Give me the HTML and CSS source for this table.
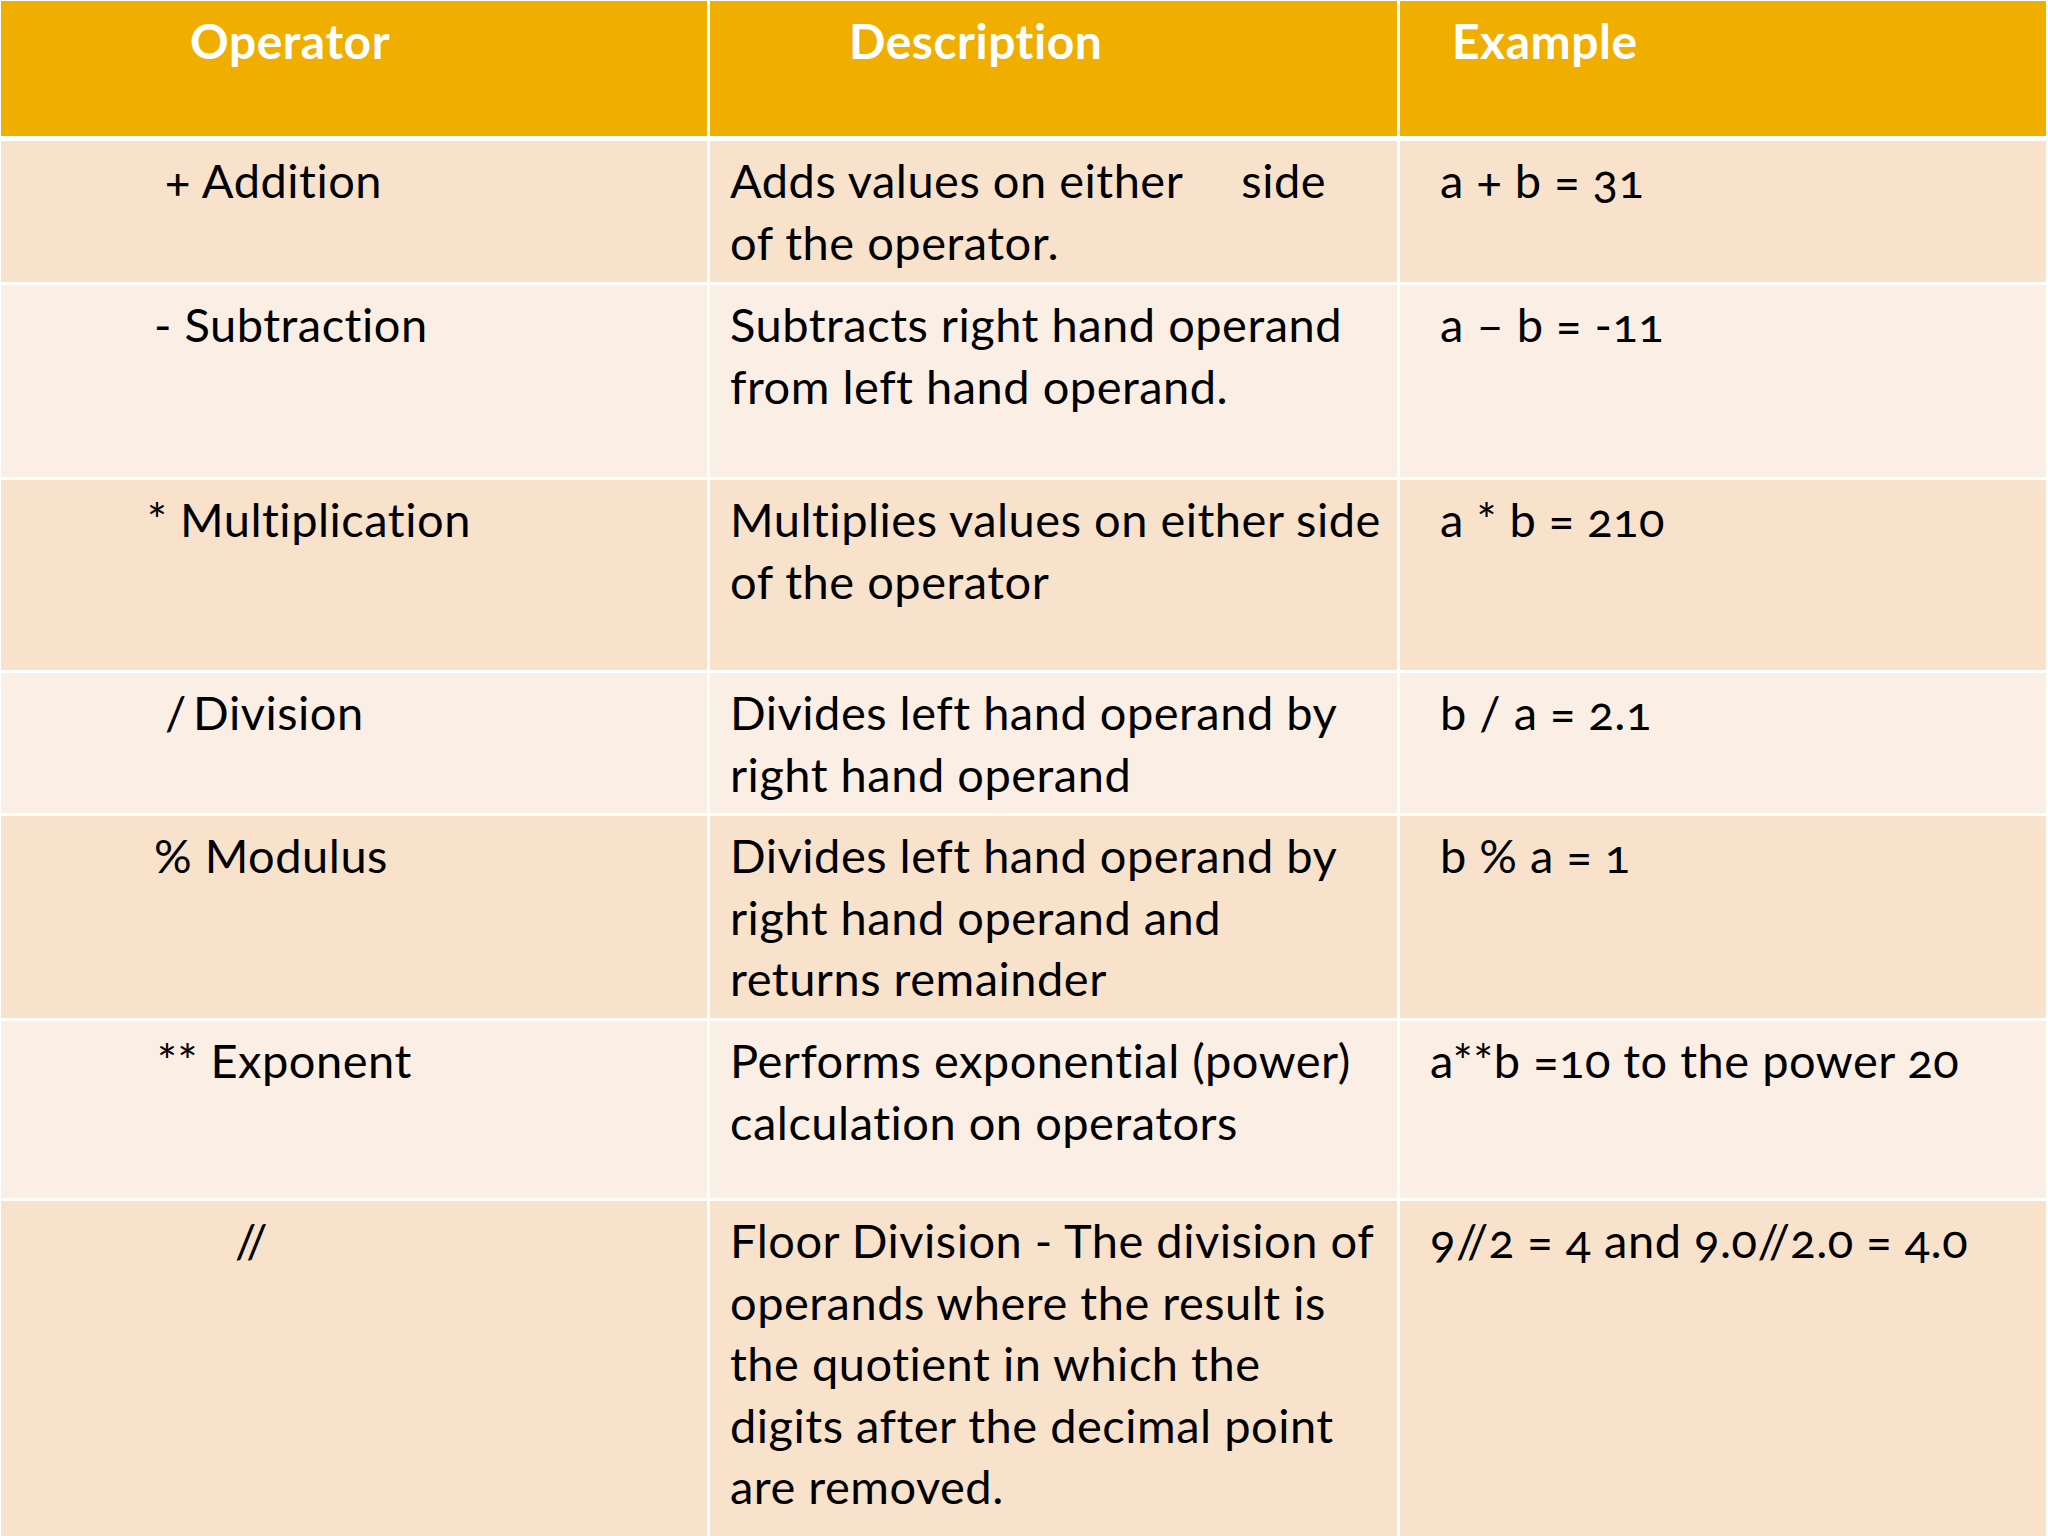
FILE: index.html
```html
<!DOCTYPE html>
<html lang="en">
<head>
<meta charset="utf-8">
<title>Python Arithmetic Operators</title>
<link rel="stylesheet" href="styles.css">
</head>
<body>
<div class="table">
  <div class="cell head h-op">Operator</div>
  <div class="cell head h-desc">Description</div>
  <div class="cell head h-ex">Example</div>

  <div class="cell odd op op-a">+ Addition</div>
  <div class="cell odd desc">Adds values on either<span class="gap"></span>side<br>of the operator.</div>
  <div class="cell odd ex">a + b = 31</div>

  <div class="cell even op op-b">- Subtraction</div>
  <div class="cell even desc">Subtracts right hand operand<br>from left hand operand.</div>
  <div class="cell even ex">a – b = -11</div>

  <div class="cell odd op op-c">* Multiplication</div>
  <div class="cell odd desc">Multiplies values on either side<br>of the operator</div>
  <div class="cell odd ex">a * b = 210</div>

  <div class="cell even op op-a">/&#8201;Division</div>
  <div class="cell even desc">Divides left hand operand by<br>right hand operand</div>
  <div class="cell even ex">b / a = 2.1</div>

  <div class="cell odd op op-b">% Modulus</div>
  <div class="cell odd desc">Divides left hand operand by<br>right hand operand and<br>returns remainder</div>
  <div class="cell odd ex">b % a = 1</div>

  <div class="cell even op op-d">** Exponent</div>
  <div class="cell even desc">Performs exponential (power)<br>calculation on operators</div>
  <div class="cell even ex ex-wide">a**b =10 to the power 20</div>

  <div class="cell odd op op-e">//</div>
  <div class="cell odd desc">Floor Division - The division of<br>operands where the result is<br>the quotient in which the<br>digits after the decimal point<br>are removed.</div>
  <div class="cell odd ex ex-wide">9//2 = 4 and 9.0//2.0 = 4.0</div>
</div>
</body>
</html>
```

FILE: styles.css
```css
html, body {
  margin: 0;
  padding: 0;
  background: #ffffff;
  overflow: hidden;
}

body {
  width: 2048px;
  height: 1536px;
  font-family: "Lato", "Open Sans", "Liberation Sans", sans-serif;
  font-variant-numeric: oldstyle-nums;
  color: #000000;
}

.table {
  display: grid;
  grid-template-columns: 706px 687px 646px;
  grid-template-rows: 137px 141px 192px 190px 140px 202px 177px 340px;
  column-gap: 3px;
  row-gap: 3px;
  margin: 1px 0 0 1px;
  width: 2045px;
  background: #ffffff;
}

.cell {
  box-sizing: border-box;
  font-size: 47px;
  letter-spacing: 0.5px;
  line-height: 61.5px;
  padding-top: 9px;
  white-space: nowrap;
}

.head {
  background: #f0ae00;
  color: #ffffff;
  font-weight: 700;
  font-size: 48px;
  border-bottom: 2px solid #ffffff;
  padding-top: 9px;
}

.h-op { padding-left: 189px; }
.h-desc { padding-left: 139px; }
.h-ex { padding-left: 52px; }

.odd { background: #f9e2cb; }
.even { background: #fbefe5; }

.op-a { padding-left: 164px; }
.op-b { padding-left: 153px; }
.op-c { padding-left: 146px; }
.op-d { padding-left: 156px; }
.op-e { padding-left: 234px; }

.desc {
  padding-left: 20px;
}

.gap {
  display: inline-block;
  width: 58px;
}

.ex { padding-left: 40px; }
.ex-wide { padding-left: 30px; }
```
